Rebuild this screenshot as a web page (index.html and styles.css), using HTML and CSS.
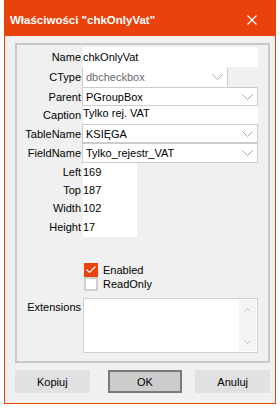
FILE: index.html
```html
<!DOCTYPE html>
<html lang="pl">
<head>
  <meta charset="UTF-8" />
  <title>Właściwości</title>
  <link rel="stylesheet" href="styles.css">
</head>
<body>
  <div class="okno">
    <div class="pasek">
      <span class="tytul">Właściwości "chkOnlyVat"</span>
      <svg class="zamknij" width="10" height="10" viewBox="0 0 10 10">
        <path d="M0.5 0.5 L9.5 9.5 M9.5 0.5 L0.5 9.5" stroke="#fff" stroke-width="1.2" fill="none" />
      </svg>
    </div>

    <div class="tresc">
      <div class="grupa">
        <div class="wiersz h20">
          <span class="etykieta">Name</span>
          <div class="pole szerokie">chkOnlyVat</div>
        </div>
        <div class="wiersz h20">
          <span class="etykieta">CType</span>
          <div class="combo waskie wylaczone">
            <span>dbcheckbox</span>
            <svg class="strzalka" width="11" height="6" viewBox="0 0 11 6"><path d="M0.5 0.5 L5.5 5.5 L10.5 0.5" stroke="#a6a6a6" fill="none" /></svg>
          </div>
        </div>
        <div class="wiersz h19">
          <span class="etykieta">Parent</span>
          <div class="combo szerokie">
            <span>PGroupBox</span>
            <svg class="strzalka" width="11" height="6" viewBox="0 0 11 6"><path d="M0.5 0.5 L5.5 5.5 L10.5 0.5" stroke="#a6a6a6" fill="none" /></svg>
          </div>
        </div>
        <div class="wiersz h18">
          <span class="etykieta">Caption</span>
          <div class="pole szerokie gora">Tylko rej. VAT</div>
        </div>
        <div class="wiersz h19">
          <span class="etykieta">TableName</span>
          <div class="combo szerokie">
            <span>KSIĘGA</span>
            <svg class="strzalka" width="11" height="6" viewBox="0 0 11 6"><path d="M0.5 0.5 L5.5 5.5 L10.5 0.5" stroke="#a6a6a6" fill="none" /></svg>
          </div>
        </div>
        <div class="wiersz h20">
          <span class="etykieta">FieldName</span>
          <div class="combo szerokie">
            <span>Tylko_rejestr_VAT</span>
            <svg class="strzalka" width="11" height="6" viewBox="0 0 11 6"><path d="M0.5 0.5 L5.5 5.5 L10.5 0.5" stroke="#a6a6a6" fill="none" /></svg>
          </div>
        </div>
        <div class="wiersz h18">
          <span class="etykieta">Left</span>
          <div class="pole liczba">169</div>
        </div>
        <div class="wiersz h18">
          <span class="etykieta">Top</span>
          <div class="pole liczba">187</div>
        </div>
        <div class="wiersz h18">
          <span class="etykieta">Width</span>
          <div class="pole liczba">102</div>
        </div>
        <div class="wiersz h20">
          <span class="etykieta">Height</span>
          <div class="pole liczba">17</div>
        </div>

        <div class="opcje">
          <label class="opcja">
            <span class="kratka zaznaczona">
              <svg width="10" height="8" viewBox="0 0 10 8"><path d="M0.5 3.5 L3.5 6.5 L9.5 0.5" stroke="#fff" stroke-width="1.2" fill="none" /></svg>
            </span>
            Enabled
          </label>
          <label class="opcja">
            <span class="kratka"></span>
            ReadOnly
          </label>
        </div>

        <div class="wiersz memo-wiersz">
          <span class="etykieta">Extensions</span>
          <div class="memo">
            <div class="suwak">
              <svg width="7" height="4" viewBox="0 0 7 4"><path d="M0.5 3.5 L3.5 0.5 L6.5 3.5" stroke="#c2c2c2" fill="none" /></svg>
              <svg width="7" height="4" viewBox="0 0 7 4"><path d="M0.5 0.5 L3.5 3.5 L6.5 0.5" stroke="#c2c2c2" fill="none" /></svg>
            </div>
          </div>
        </div>
      </div>

      <div class="przyciski">
        <button class="przycisk">Kopiuj</button>
        <button class="przycisk domyslny">OK</button>
        <button class="przycisk">Anuluj</button>
      </div>
    </div>
  </div>
</body>
</html>
```

FILE: styles.css
```css
* {
  box-sizing: border-box;
}

html, body {
  margin: 0;
  padding: 0;
  background: #fff;
  font-family: "Liberation Sans", Arial, sans-serif;
  font-size: 11px;
  color: #000;
}

.okno {
  margin-left: 4px;
  width: 272px;
  height: 404px;
  background: #f0f0f0;
  border: 1px solid #e9420c;
  border-top: 0;
}

.pasek {
  height: 36px;
  background: #e9420c;
  display: flex;
  align-items: center;
  padding: 3px 18px 0 5px;
}

.tytul {
  flex: 1;
  color: #fff;
  font-weight: bold;
  font-size: 11.5px;
}

.zamknij {
  display: block;
  margin-top: 1px;
}

.tresc {
  padding: 7px 5px 0 10px;
}

.grupa {
  height: 320px;
  border: 2px solid #c8c8c8;
  padding-top: 2px;
}

.wiersz {
  display: flex;
  align-items: stretch;
}

.h18 { height: 18px; }
.h19 { height: 19px; }
.h20 { height: 20px; }

.etykieta {
  width: 64px;
  margin-right: 2px;
  text-align: right;
  display: flex;
  align-items: center;
  justify-content: flex-end;
}

.pole {
  background: #fff;
  display: flex;
  align-items: center;
  white-space: nowrap;
}

.pole.gora {
  align-items: flex-start;
  padding-top: 1px;
}

.szerokie {
  width: 175px;
}

.waskie {
  width: 146px;
}

.liczba {
  width: 54px;
}

.combo {
  margin-left: -1px;
  background: #fff;
  border: 1px solid #cccccc;
  display: flex;
  align-items: center;
  padding: 0 4px 0 3px;
}

.combo.szerokie {
  width: 176px;
}

.combo span {
  flex: 1;
}

.wylaczone {
  color: #6d6d6d;
  border-top-color: #fff;
  border-bottom-color: #fff;
}

.strzalka {
  display: block;
}

.opcje {
  margin: 26px 0 0 67px;
}

.opcja {
  display: flex;
  align-items: center;
  height: 14px;
}

.kratka {
  width: 14px;
  height: 14px;
  margin-right: 5px;
  background: #fff;
  border: 2px solid #cfcfcf;
  display: flex;
  align-items: center;
  justify-content: center;
}

.kratka.zaznaczona {
  background: #e9420c;
  border-color: #e9420c;
}

.memo-wiersz {
  margin-top: 7px;
  height: 55px;
}

.memo-wiersz .etykieta {
  align-items: flex-start;
  padding-top: 3px;
}

.memo {
  width: 175px;
  background: #fff;
  border: 1px solid #d0d0d0;
  display: flex;
  justify-content: flex-end;
  padding: 1px;
}

.suwak {
  width: 17px;
  background: #f4f4f4;
  display: flex;
  flex-direction: column;
  align-items: center;
  justify-content: space-between;
  padding: 8px 0 7px;
}

.suwak svg {
  display: block;
}

.przyciski {
  display: flex;
  margin-top: 7px;
}

.przycisk {
  width: 75px;
  height: 23px;
  background: #e1e1e1;
  border: 1px solid #e1e1e1;
  font-family: "Liberation Sans", Arial, sans-serif;
  font-size: 11px;
  color: #000;
  padding: 0;
}

.przycisk.domyslny {
  margin: 0 13px 0 18px;
  background: #cccccc;
  border: 2px solid #7a7a7a;
}
```
